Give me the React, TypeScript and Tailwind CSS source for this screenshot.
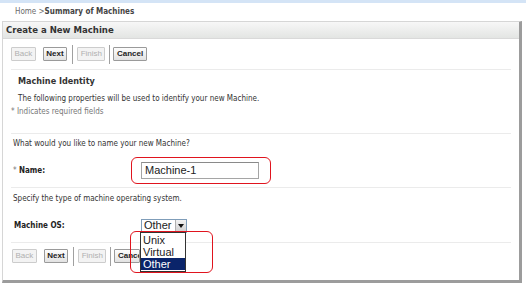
const body = { fontFamily: '"DejaVu Sans Condensed", "DejaVu Sans", sans-serif' };
const arial = { fontFamily: '"Liberation Sans", Arial, sans-serif' };

const WizardButton = ({
  label,
  disabled,
  clipTo,
}: {
  label: string;
  disabled?: boolean;
  clipTo?: number;
}) => (
  <div
    style={clipTo ? { ...arial, maxWidth: clipTo } : arial}
    className={
      "h-[14px] px-[2.5px] flex items-center overflow-hidden whitespace-nowrap border text-[8px] leading-none rounded-[1px] " +
      (disabled
        ? "border-[#cccccc] text-[#b0b0b0] bg-[#f3f3f3]"
        : "border-[#9a9a9a] text-[#222] font-bold bg-gradient-to-b from-[#fdfdfd] to-[#e2e2e2]")
    }
  >
    {label}
  </div>
);

const ButtonBar = ({ clipCancel }: { clipCancel?: boolean }) => (
  <div className="flex items-center h-[14px]">
    <WizardButton label="Back" disabled />
    <div className="w-[7px]" />
    <WizardButton label="Next" />
    <div className="w-[5px]" />
    <div className="w-px h-[19px] bg-[#a0a0a0]" />
    <div className="w-[4px]" />
    <WizardButton label="Finish" disabled />
    <div className="w-[4px]" />
    <div className="w-px h-[19px] bg-[#a0a0a0]" />
    <div className="w-[3px]" />
    <WizardButton label="Cancel" clipTo={clipCancel ? 26 : undefined} />
  </div>
);

const Rule = () => <div className="mx-[8px] h-px bg-[#ebebeb]" />;

export default function App() {
  return (
    <div style={body} className="relative w-[526px] h-[287px] bg-white overflow-hidden text-[#222]">
      {/* top strip */}
      <div className="h-[3px] bg-[#d4e4f6]" />

      {/* breadcrumb */}
      <div className="h-[18px] pl-[15px] flex items-center text-[8px] text-[#6a6a6a]">
        Home &gt;<span className="font-bold text-[#444]">Summary of Machines</span>
      </div>

      {/* panel */}
      <div className="ml-[2px] w-[520px] h-[262px] border-l border-t border-[#d6d6d6] border-r-[3px] border-b-[3px] border-r-[#9c9c9c] border-b-[#9c9c9c] flex flex-col">
        <div className="h-[17px] shrink-0 flex items-center pl-[3px] border-b border-[#d9d9d9] bg-gradient-to-b from-[#f7f7f7] to-[#e3e5e3] text-[9.5px] font-bold text-[#333]">
          Create a New Machine
        </div>

        <div className="h-[30px] shrink-0 pl-[8px] pt-[8px]">
          <ButtonBar />
        </div>
        <Rule />

        <div className="pl-[15px] pt-[5px] h-[21px] shrink-0 text-[9px] font-bold text-[#333]">Machine Identity</div>
        <div className="pl-[15px] h-[13px] shrink-0 pt-[2px] text-[8px] text-[#333]">
          The following properties will be used to identify your new Machine.
        </div>
        <div className="pl-[8px] h-[29px] shrink-0 pt-[2px] text-[8px] text-[#777]">* Indicates required fields</div>
        <Rule />

        <div className="pl-[10px] h-[20px] shrink-0 flex items-center text-[8px] text-[#333]">
          What would you like to name your new Machine?
        </div>
        <div className="h-[33px] shrink-0 flex items-center pl-[10px]">
          <div className="w-[128px] text-[8px] font-bold text-[#222]">
            <span className="font-normal text-[#777]">* </span>Name:
          </div>
          <div
            style={arial}
            className="w-[118px] h-[17px] border border-[#a5a5a5] border-t-[#8a8a8a] bg-white flex items-center pl-[3px] text-[11px] text-[#222]"
          >
            Machine-1
          </div>
        </div>
        <Rule />

        <div className="pl-[10px] h-[21px] shrink-0 flex items-center text-[8px] text-[#333]">
          Specify the type of machine operating system.
        </div>
        <div className="h-[33px] shrink-0 flex items-center pl-[11px]">
          <div className="w-[127px] text-[8px] font-bold text-[#222]">Machine OS:</div>
          <div
            style={arial}
            className="w-[46px] h-[14px] border border-[#7f9db9] bg-white flex items-center text-[11px] text-[#222]"
          >
            <div className="flex-1 pl-[2px] leading-none">Other</div>
            <div className="w-[11px] h-full bg-gradient-to-b from-[#f2f2f2] to-[#cfcfcf] border-l border-[#b0b0b0] flex items-center justify-center">
              <div className="w-0 h-0 border-l-[3px] border-r-[3px] border-t-[4px] border-l-transparent border-r-transparent border-t-[#111]" />
            </div>
          </div>
        </div>
        <Rule />

        <div className="pl-[9px] pt-[6px]">
          <ButtonBar clipCancel />
        </div>
      </div>

      {/* open select list */}
      <div
        style={arial}
        className="absolute left-[140px] top-[232px] w-[46px] border border-[#333] bg-white text-[11px] leading-[12px] text-[#222] py-px"
      >
        <div className="pl-[2px]">Unix</div>
        <div className="pl-[2px]">Virtual</div>
        <div className="pl-[2px] bg-[#0a246a] text-white">Other</div>
      </div>

      {/* red annotation boxes */}
      <div className="absolute left-[131px] top-[157px] w-[140px] h-[27px] border border-[#e0141e] rounded-[6px]" />
      <div className="absolute left-[130px] top-[231px] w-[83px] h-[42px] border border-[#e0141e] rounded-[6px]" />
    </div>
  );
}
